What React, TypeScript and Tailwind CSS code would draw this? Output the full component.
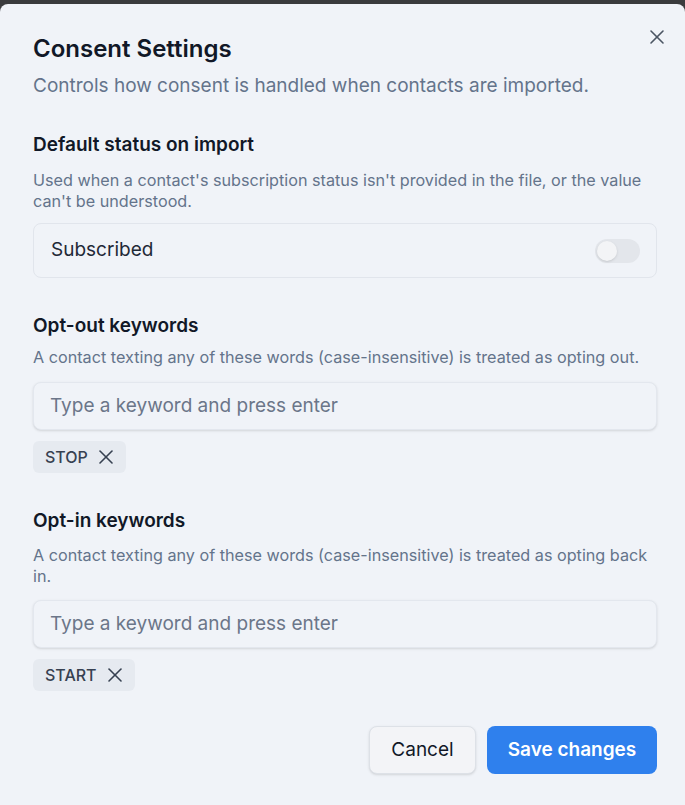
import { X } from 'lucide-react';

const FONT = { fontFamily: 'Inter, "Noto Sans", sans-serif' };

function KeywordField({ chip }: { chip: string }) {
    return (
        <>
            <div className="h-12 rounded-lg border border-[#e3e7ee] bg-[#f0f3f8] shadow-sm flex items-center px-4">
                <span className="text-[19px] text-[#6b7689]">Type a keyword and press enter</span>
            </div>
            <div className="mt-[11px] flex">
                <span className="h-8 inline-flex items-center gap-[6px] rounded-md bg-[#e6eaf0] pl-3 pr-2 text-[16px] font-medium text-[#374151]">
                    {chip}
                    <X className="w-6 h-6 text-[#374151]" strokeWidth={1.6} />
                </span>
            </div>
        </>
    );
}

export default function App() {
    return (
        <div className="w-[685px] h-[805px] bg-[#3a3b3d] pt-1 overflow-hidden" style={FONT}>
            <div className="relative h-[812px] rounded-lg bg-[#f0f3f8] pl-[33px] pr-[28px] pt-[30px]">
                {/* Close */}
                <button className="absolute right-[16px] top-[21px] text-[#4b5563]">
                    <X className="w-6 h-6" strokeWidth={1.6} />
                </button>

                {/* Header */}
                <h2 className="text-[24px] leading-[30px] font-semibold text-[#111827]">Consent Settings</h2>
                <p className="mt-[9px] text-[19px] leading-[26px] text-[#64748b]">
                    Controls how consent is handled when contacts are imported.
                </p>

                {/* Default status */}
                <h3 className="mt-[33px] text-[19px] leading-[26px] font-semibold text-[#111827]">Default status on import</h3>
                <p className="mt-[12px] text-[16.2px] leading-[21px] text-[#64748b]">
                    Used when a contact's subscription status isn't provided in the file, or the value can't be understood.
                </p>
                <div className="mt-[11px] h-[55px] rounded-lg border border-[#e1e5ec] flex items-center justify-between pl-[17px] pr-[16px]">
                    <span className="text-[19px] text-[#1f2937]">Subscribed</span>
                    <span className="w-[45px] h-[24px] rounded-full bg-[#e3e6eb] p-[2px] flex">
                        <span className="w-5 h-5 rounded-full bg-[#f3f4f6] shadow-sm" />
                    </span>
                </div>

                {/* Opt-out */}
                <h3 className="mt-[35px] text-[19px] leading-[26px] font-semibold text-[#111827]">Opt-out keywords</h3>
                <p className="mt-[8px] text-[16.2px] leading-[21px] text-[#64748b]">
                    A contact texting any of these words (case-insensitive) is treated as opting out.
                </p>
                <div className="mt-[14px]">
                    <KeywordField chip="STOP" />
                </div>

                {/* Opt-in */}
                <h3 className="mt-[35px] text-[19px] leading-[26px] font-semibold text-[#111827]">Opt-in keywords</h3>
                <p className="mt-[11px] text-[16.2px] leading-[21px] text-[#64748b]">
                    A contact texting any of these words (case-insensitive) is treated as opting back in.
                </p>
                <div className="mt-[13px]">
                    <KeywordField chip="START" />
                </div>

                {/* Footer */}
                <div className="mt-[35px] flex justify-end gap-[11px]">
                    <button className="h-12 w-[107px] rounded-lg border border-[#dde1e7] bg-[#f3f4f7] shadow-sm text-[19px] text-[#111827]">
                        Cancel
                    </button>
                    <button className="h-12 w-[170px] rounded-lg bg-[#2f80ed] text-[19px] font-semibold text-white">
                        Save changes
                    </button>
                </div>
            </div>
        </div>
    );
}
